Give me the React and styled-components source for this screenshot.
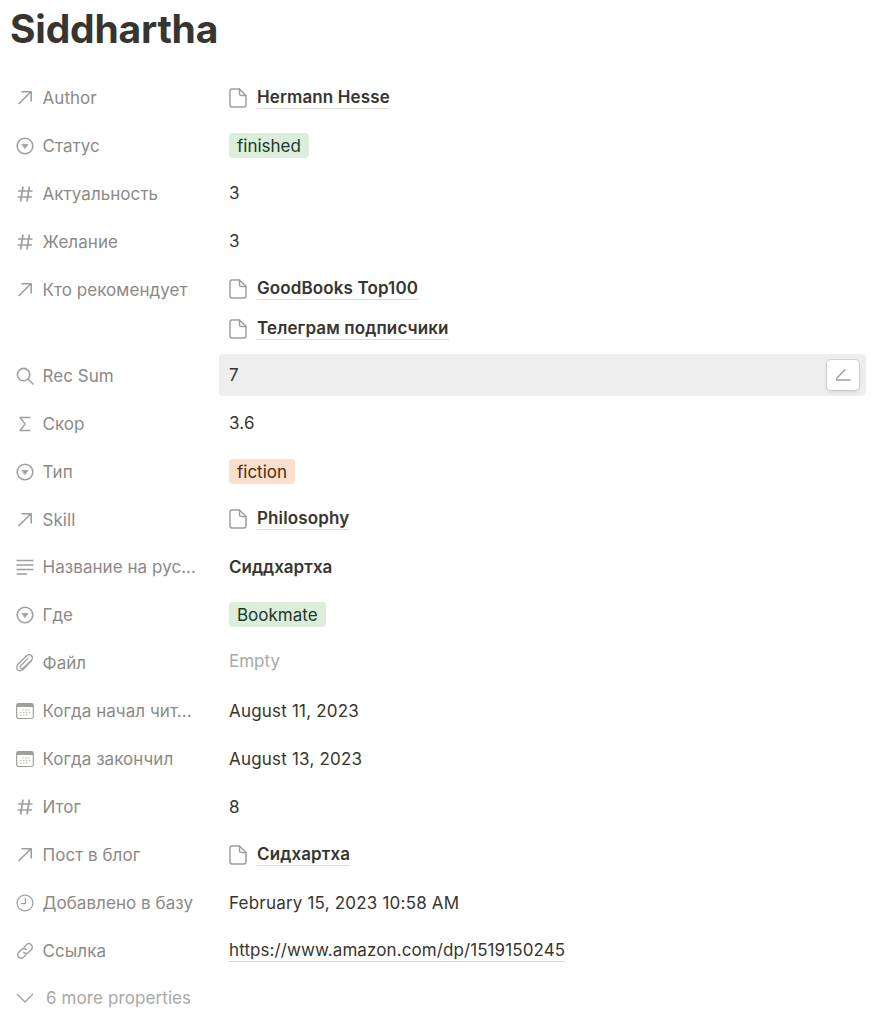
import React from "react"
import styled, { createGlobalStyle } from "styled-components"

const GlobalStyle = createGlobalStyle`
  html, body {
    margin: 0;
    background: #fff;
  }
  body {
    font-family: Inter, "Liberation Sans", sans-serif;
    color: #37352f;
  }
`

const stroke = {
  fill: "none",
  stroke: "#a09f9c",
  strokeWidth: 1.6,
  strokeLinecap: "round",
  strokeLinejoin: "round",
}

const ArrowIcon = () => (
  <svg width="18" height="18" viewBox="0 0 18 18" {...stroke}>
    <path d="M2.5 15 L15 2.8 M5.5 2.8 H15.2 V12.5" strokeLinecap="butt" />
  </svg>
)

const SelectIcon = () => (
  <svg width="18" height="18" viewBox="0 0 18 18" {...stroke}>
    <circle cx="9" cy="9" r="7.8" />
    <path d="M5.8 7.3 H12.2 L9 11.6 Z" fill="#a09f9c" strokeWidth="0.6" />
  </svg>
)

const HashIcon = () => (
  <svg width="18" height="18" viewBox="0 0 18 18" {...stroke} strokeWidth="1.7">
    <path d="M7 1.5 L4.6 16.5 M13.4 1.5 L11 16.5 M2 6 H16.5 M1.5 12 H16" strokeLinecap="butt" />
  </svg>
)

const SearchIcon = () => (
  <svg width="18" height="18" viewBox="0 0 18 18" {...stroke}>
    <circle cx="7.6" cy="7.6" r="6.2" />
    <path d="M12.2 12.2 L17 17" />
  </svg>
)

const SigmaIcon = () => (
  <svg width="18" height="18" viewBox="0 0 18 18" {...stroke} strokeWidth="1.3">
    <path d="M14 3.2 V2.5 H4 L9.2 9 L4 15.5 H14 V14.8" strokeLinecap="butt" />
  </svg>
)

const TextIcon = () => (
  <svg width="18" height="18" viewBox="0 0 18 18" {...stroke} strokeWidth="1.3">
    <path d="M0.5 2.5 H17.5 M0.5 7 H17.5 M0.5 11.5 H17.5 M0.5 16 H11" strokeLinecap="butt" />
  </svg>
)

const ClipIcon = () => (
  <svg width="18" height="18" viewBox="0 0 18 18" {...stroke} strokeWidth="1.3">
    <path d="M15.6 6.5 L7.6 15 C5.8 17 2.9 17.2 1.6 15.9 C0.3 14.6 0.5 11.8 2.4 9.8 L10.6 1.8 C12 0.5 14.2 0.4 15.5 1.6 C16.8 2.8 16.6 5 15.2 6.4 L7.6 13.8 C6.8 14.6 5.4 14.8 4.7 14.1 C4 13.4 4.2 12 5 11.2 L11.8 4.6" />
  </svg>
)

const CalendarIcon = () => (
  <svg width="18" height="18" viewBox="0 0 18 18">
    <rect x="0.7" y="1.5" width="16.6" height="15" rx="1.8" fill="none" stroke="#a09f9c" strokeWidth="1.2" />
    <path d="M0.7 3.3 C0.7 2.3 1.5 1.5 2.5 1.5 H15.5 C16.5 1.5 17.3 2.3 17.3 3.3 V5 H0.7 Z" fill="#a09f9c" />
    <path d="M6 8 H7.5 M9 8 H10.5 M12 8 H13.5 M4 10.5 H5.5 M7 10.5 H8.5 M10 10.5 H11.5 M13 10.5 H14.5 M4 13 H5.5 M7 13 H8.5 M10 13 H11.5" stroke="#b9b8b5" strokeWidth="1.1" />
  </svg>
)

const ClockIcon = () => (
  <svg width="18" height="18" viewBox="0 0 18 18" {...stroke} strokeWidth="1.3">
    <circle cx="9" cy="9" r="7.9" />
    <path d="M9.4 3.8 V9.6 H4.8" strokeLinecap="butt" />
  </svg>
)

const LinkIcon = () => (
  <svg width="18" height="18" viewBox="0 0 18 18" {...stroke} strokeWidth="1.4">
    <path d="M8 5.2 L10.2 3 C11.6 1.5 13.7 1.3 15.2 2.7 C16.7 4.1 16.6 6.3 15.2 7.8 L12.7 10.3 C11.3 11.7 9.2 11.8 7.8 10.4" />
    <path d="M10 12.8 L7.8 15 C6.4 16.5 4.3 16.7 2.8 15.3 C1.3 13.9 1.4 11.7 2.8 10.2 L5.3 7.7 C6.7 6.3 8.8 6.2 10.2 7.6" />
  </svg>
)

const PageIcon = () => (
  <svg width="18" height="20" viewBox="0 0 18 20" {...stroke} strokeWidth="1.5">
    <path d="M3 1 H10.5 L17 7.5 V16.8 C17 18 16.2 19 15 19 H3 C1.8 19 1 18 1 16.8 V3.2 C1 2 1.8 1 3 1 Z" />
    <path d="M10.5 1 V5.8 C10.5 6.9 11.2 7.5 12.2 7.5 H17" />
  </svg>
)

const ChevronIcon = () => (
  <svg width="18" height="10" viewBox="0 0 18 10" {...stroke} strokeWidth="1.3">
    <path d="M1 1 L9 9 L17 1" strokeLinecap="butt" />
  </svg>
)

const EditIcon = () => (
  <svg width="16" height="13" viewBox="0 0 16 13" {...stroke} strokeWidth="1.4">
    <path d="M1 11 L10.5 1.2 M1 12 H15.5" strokeLinecap="butt" />
  </svg>
)

const Doc = ({ children }) => (
  <PageLink>
    <PageIcon />
    <PageTitle>{children}</PageTitle>
  </PageLink>
)

const Value = ({ kind, children }) => {
  if (kind === "green" || kind === "orange") return <Tag $tone={kind}>{children}</Tag>
  if (kind === "empty") return <Empty>{children}</Empty>
  if (kind === "bold") return <Bold>{children}</Bold>
  if (kind === "url") return <Url>{children}</Url>
  if (kind === "doc") return <Doc>{children}</Doc>
  return <Plain>{children}</Plain>
}

const properties = [
  { icon: ArrowIcon, label: "Author", kind: "doc", values: ["Hermann Hesse"] },
  { icon: SelectIcon, label: "Статус", kind: "green", values: ["finished"] },
  { icon: HashIcon, label: "Актуальность", values: ["3"] },
  { icon: HashIcon, label: "Желание", values: ["3"] },
  { icon: ArrowIcon, label: "Кто рекомендует", kind: "doc", values: ["GoodBooks Top100", "Телеграм подписчики"] },
  { icon: SearchIcon, label: "Rec Sum", values: ["7"], hovered: true },
  { icon: SigmaIcon, label: "Скор", values: ["3.6"] },
  { icon: SelectIcon, label: "Тип", kind: "orange", values: ["fiction"] },
  { icon: ArrowIcon, label: "Skill", kind: "doc", values: ["Philosophy"] },
  { icon: TextIcon, label: "Название на рус...", kind: "bold", values: ["Сиддхартха"] },
  { icon: SelectIcon, label: "Где", kind: "green", values: ["Bookmate"] },
  { icon: ClipIcon, label: "Файл", kind: "empty", values: ["Empty"] },
  { icon: CalendarIcon, label: "Когда начал чит...", values: ["August 11, 2023"] },
  { icon: CalendarIcon, label: "Когда закончил", values: ["August 13, 2023"] },
  { icon: HashIcon, label: "Итог", values: ["8"] },
  { icon: ArrowIcon, label: "Пост в блог", kind: "doc", values: ["Сидхартха"] },
  { icon: ClockIcon, label: "Добавлено в базу", values: ["February 15, 2023 10:58 AM"] },
  { icon: LinkIcon, label: "Ссылка", kind: "url", values: ["https://www.amazon.com/dp/1519150245"] },
]

const App = () => {
  return (
    <Page>
      <GlobalStyle />
      <Title>Siddhartha</Title>
      <List>
        {properties.map((item) => (
          <Row key={item.label}>
            <Label>
              <IconSlot>
                <item.icon />
              </IconSlot>
              {item.label}
            </Label>
            <Cell $hovered={item.hovered}>
              {item.values.map((value) => (
                <Line key={value}>
                  <Value kind={item.kind}>{value}</Value>
                </Line>
              ))}
              {item.hovered && (
                <EditButton>
                  <EditIcon />
                </EditButton>
              )}
            </Cell>
          </Row>
        ))}
      </List>
      <More>
        <IconSlot>
          <ChevronIcon />
        </IconSlot>
        6 more properties
      </More>
    </Page>
  )
}

export default App

const Page = styled.div`
  width: 884px;
  height: 1024px;
  overflow: hidden;
  box-sizing: border-box;
  padding: 6px 18px 0 16px;
`

const Title = styled.h1`
  margin: 0 0 0 -6px;
  height: 70px;
  font-size: 39px;
  line-height: 46px;
  font-weight: 700;
  letter-spacing: -0.2px;
  color: #37352f;
`

const List = styled.div`
  display: flex;
  flex-direction: column;
  gap: 5.95px;
`

const Row = styled.div`
  display: grid;
  grid-template-columns: 203px 1fr;
`

const Label = styled.div`
  display: flex;
  align-items: center;
  height: 42px;
  padding-top: 2px;
  box-sizing: border-box;
  font-size: 17px;
  letter-spacing: 0.05px;
  color: #8b8a86;
  white-space: nowrap;
`

const IconSlot = styled.span`
  display: flex;
  align-items: center;
  justify-content: flex-start;
  width: 26.5px;
  flex: none;
`

const Cell = styled.div`
  position: relative;
  display: flex;
  flex-direction: column;
  padding-left: 10px;
  border-radius: 4px;
  background: ${(p) => (p.$hovered ? "#eeeeee" : "transparent")};
`

const Line = styled.div`
  display: flex;
  align-items: center;
  height: 42px;
  padding-top: 1px;
  box-sizing: border-box;

  & + & {
    height: 38px;
  }
`

const Plain = styled.span`
  font-size: 17px;
  letter-spacing: 0.2px;
  color: #37352f;
`

const Bold = styled(Plain)`
  font-weight: 600;
  letter-spacing: 0;
`

const Empty = styled(Plain)`
  color: #a9a8a5;
  letter-spacing: 0;
  margin-bottom: 3px;
`

const Url = styled(Plain)`
  border-bottom: 1px solid #d8d7d5;
  line-height: 21px;
  letter-spacing: 0.09px;
  margin-top: 2px;
`

const PageLink = styled.span`
  display: inline-flex;
  align-items: center;
  gap: 10px;
`

const PageTitle = styled.span`
  font-size: 17px;
  line-height: 21px;
  font-weight: 600;
  letter-spacing: 0.12px;
  color: #37352f;
  border-bottom: 1px solid #dcdbd9;
`

const Tag = styled.span`
  height: 25px;
  padding: 0 8px;
  border-radius: 4px;
  font-size: 17px;
  line-height: 26px;
  background: ${(p) => (p.$tone === "orange" ? "#fbdfcd" : "#dbeddb")};
  color: ${(p) => (p.$tone === "orange" ? "#49290e" : "#1c3829")};
`

const EditButton = styled.div`
  position: absolute;
  top: 6px;
  right: 7px;
  width: 32px;
  height: 30px;
  display: flex;
  align-items: center;
  justify-content: center;
  background: #fff;
  border-radius: 4px;
  box-shadow: 0 0 0 1px rgba(15, 15, 15, 0.1), 0 2px 4px rgba(15, 15, 15, 0.1);
`

const More = styled.div`
  display: flex;
  align-items: center;
  height: 42px;
  margin-top: 6px;
  font-size: 17px;
  color: #a9a8a5;
  letter-spacing: 0.1px;

  ${IconSlot} {
    width: 30px;
  }
`
